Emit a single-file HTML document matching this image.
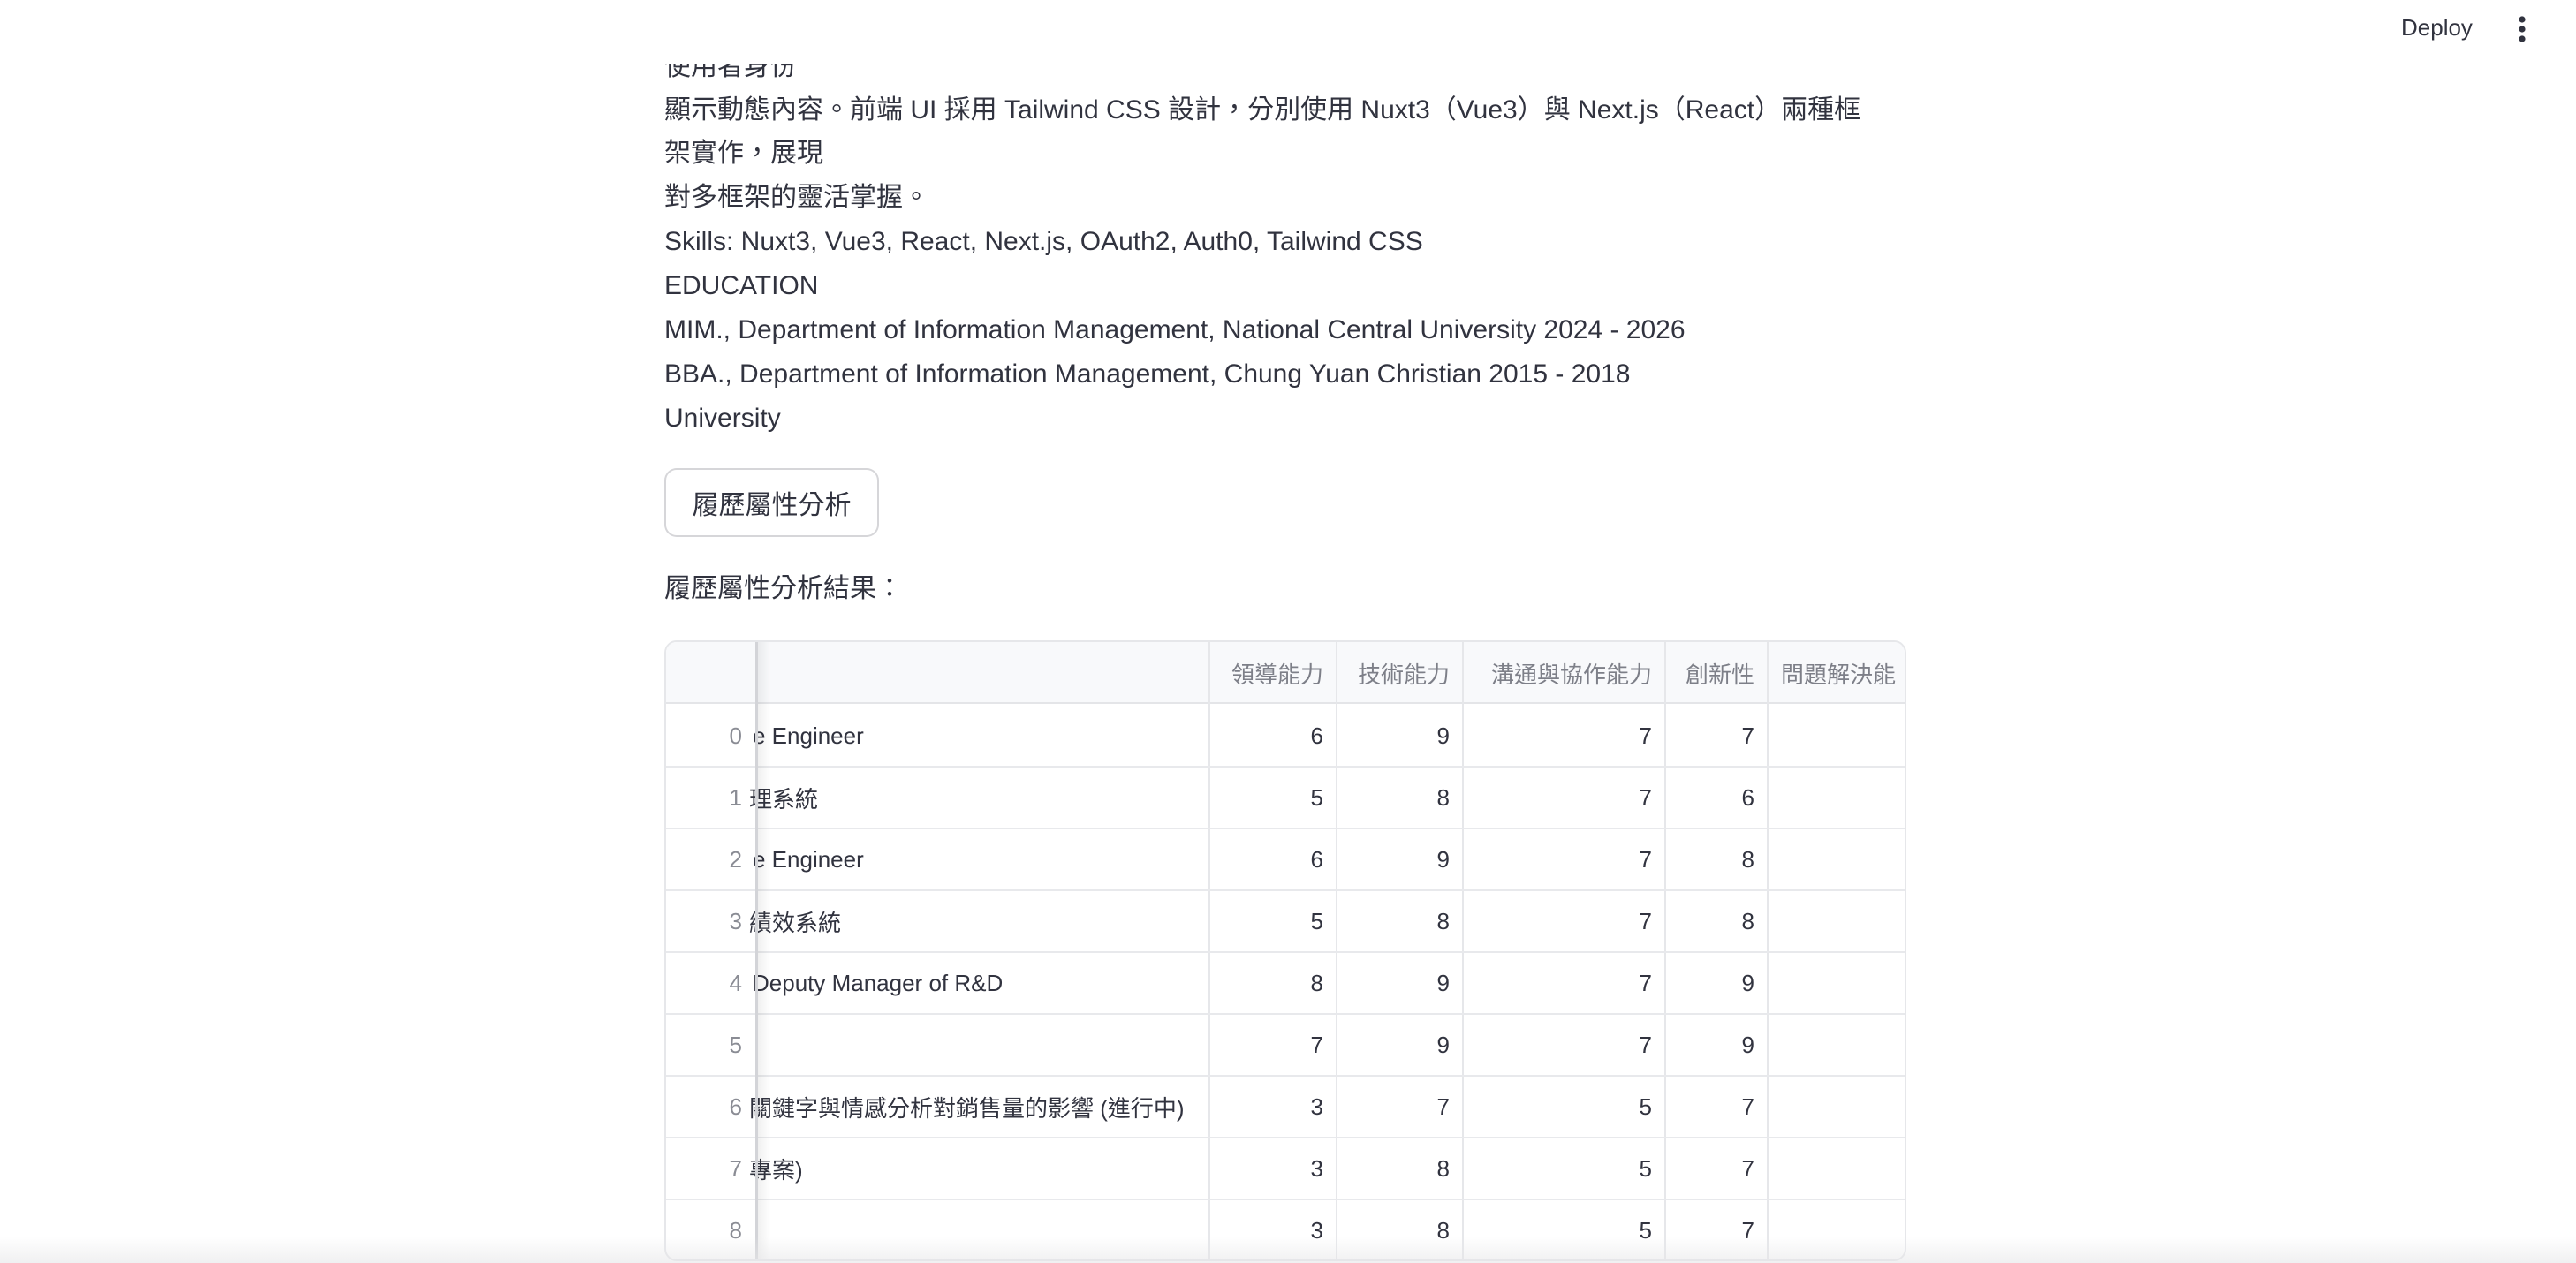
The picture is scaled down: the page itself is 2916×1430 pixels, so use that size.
<!DOCTYPE html>
<html><head><meta charset="utf-8"><style>
*{margin:0;padding:0;box-sizing:border-box}
body{width:2916px;height:1430px;overflow:hidden;background:#fff;font-family:"Liberation Sans","Noto Sans CJK TC",sans-serif;color:rgb(49,51,63);position:relative}
.t{position:absolute;left:752px;font-size:30px;line-height:50px;white-space:nowrap}
.hdr{position:absolute;left:0;top:0;width:2916px;height:72px;background:#fff}
.btn{position:absolute;left:752px;top:530px;width:243px;height:78px;border:2px solid rgba(49,51,63,0.2);border-radius:14px;font-size:30px;display:flex;align-items:center;justify-content:center;background:#fff}
.tbl{position:absolute;left:752px;top:725px;width:1406px;height:703px;border:2px solid #e6e7ea;border-radius:14px;overflow:hidden;font-size:26px}
.hrow{position:absolute;left:0;top:0;width:100%;height:70px;background:#f8f9fb;border-bottom:2px solid #e4e5e8}
.c{position:absolute;height:70px;display:flex;align-items:center;justify-content:flex-end;padding-right:16px;white-space:nowrap;overflow:hidden}
.vl{position:absolute;top:0;width:2px;height:100%;background:#e6e7ea}
.hl{position:absolute;left:0;width:100%;height:2px;background:#e8e9ec}
.hc{color:#7d7f88}
.ix{color:#8a8c94}
.foot{position:absolute;left:0;top:1400px;width:2916px;height:30px;background:linear-gradient(rgba(255,255,255,0),rgba(230,230,232,0.6))}
</style></head><body>
<div class="t" style="top:51px">使用者身份</div>
<div class="t" style="top:100px">顯示動態內容。前端 UI 採用 Tailwind CSS 設計，分別使用 Nuxt3（Vue3）與 Next.js（React）兩種框</div>
<div class="t" style="top:149px">架實作，展現</div>
<div class="t" style="top:199px">對多框架的靈活掌握。</div>
<div class="t" style="top:249px">Skills: Nuxt3, Vue3, React, Next.js, OAuth2, Auth0, Tailwind CSS</div>
<div class="t" style="top:299px">EDUCATION</div>
<div class="t" style="top:349px">MIM., Department of Information Management, National Central University 2024 - 2026</div>
<div class="t" style="top:399px">BBA., Department of Information Management, Chung Yuan Christian 2015 - 2018</div>
<div class="t" style="top:449px">University</div>
<div class="hdr"></div>
<div style="position:absolute;left:2718px;top:16px;font-size:26px;color:rgb(49,51,63)">Deploy</div>
<svg style="position:absolute;left:2846px;top:17px" width="18" height="34"><circle cx="9" cy="5" r="3.6" fill="#31333f"/><circle cx="9" cy="16" r="3.6" fill="#31333f"/><circle cx="9" cy="27" r="3.6" fill="#31333f"/></svg>
<div class="btn">履歷屬性分析</div>
<div class="t" style="top:642px">履歷屬性分析結果：</div>
<div class="tbl">
<div class="hrow"></div>
<div class="c hc" style="left:616px;top:0;width:144px">領導能力</div>
<div class="c hc" style="left:760px;top:0;width:143px">技術能力</div>
<div class="c hc" style="left:903px;top:0;width:229px">溝通與協作能力</div>
<div class="c hc" style="left:1132px;top:0;width:116px">創新性</div>
<div class="c hc" style="left:1248px;top:0;width:160px;justify-content:flex-start;padding-left:14px">問題解決能</div>
<div class="vl" style="left:614px"></div><div class="vl" style="left:758px"></div><div class="vl" style="left:901px"></div><div class="vl" style="left:1130px"></div><div class="vl" style="left:1246px"></div>
<div class="hl" style="top:140px"></div><div class="hl" style="top:210px"></div><div class="hl" style="top:280px"></div><div class="hl" style="top:350px"></div><div class="hl" style="top:420px"></div><div class="hl" style="top:490px"></div><div class="hl" style="top:560px"></div><div class="hl" style="top:630px"></div>
<div id="rows"></div>
<div style="position:absolute;left:0;top:0;width:102px;height:70px;background:#f8f9fb;border-bottom:2px solid #e4e5e8"></div>
<div style="position:absolute;left:101px;top:0;width:3px;height:100%;background:#d3d4d8"></div>
<div style="position:absolute;left:104px;top:0;width:14px;height:100%;background:linear-gradient(90deg,rgba(0,0,0,0.06),rgba(0,0,0,0))"></div>
</div>
<div class="foot"></div>
<script>
var d=[["e Engineer",6,9,7,7],["理系統",5,8,7,6],["e Engineer",6,9,7,8],["績效系統",5,8,7,8],["Deputy Manager of R&D",8,9,7,9],["",7,9,7,9],["關鍵字與情感分析對銷售量的影響 (進行中)",3,7,5,7],["專案)",3,8,5,7],["",3,8,5,7]];
var h="";
d.forEach(function(r,i){var y=71+i*70;
h+='<div class="c ix" style="left:0;top:'+y+'px;width:102px">'+i+'</div>';
h+='<div class="c" style="left:102px;top:'+y+'px;width:512px;justify-content:flex-start;padding-left:0;margin-left:'+(r[0].charCodeAt(0)>255?-8:-4)+'px">'+r[0].replace("&","&amp;")+'</div>';
h+='<div class="c" style="left:616px;top:'+y+'px;width:144px">'+r[1]+'</div>';
h+='<div class="c" style="left:760px;top:'+y+'px;width:143px">'+r[2]+'</div>';
h+='<div class="c" style="left:903px;top:'+y+'px;width:229px">'+r[3]+'</div>';
h+='<div class="c" style="left:1132px;top:'+y+'px;width:116px">'+r[4]+'</div>';});
document.getElementById("rows").innerHTML=h;
</script>
</body></html>
